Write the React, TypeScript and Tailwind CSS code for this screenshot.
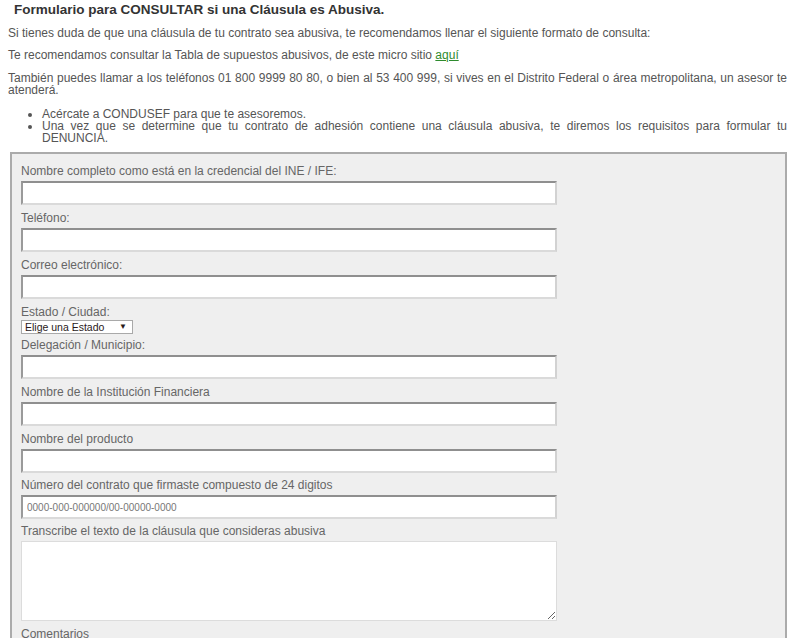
const fields = [
  { label: "Nombre completo como está en la credencial del INE / IFE:" },
  { label: "Teléfono:" },
  { label: "Correo electrónico:" },
];

const fields2 = [
  { label: "Delegación / Municipio:", gap: "mt-[4px]" },
  { label: "Nombre de la Institución Financiera", gap: "mt-[6px]" },
  { label: "Nombre del producto", gap: "mt-[6px]" },
];

function Field({ label, placeholder, gap = "mt-[6px]" }: { label: string; placeholder?: string; gap?: string }) {
  return (
    <div className={gap}>
      <label className="block text-[12px] leading-[14px] text-[#666]">{label}</label>
      <input
        type="text"
        placeholder={placeholder}
        className="mt-[3px] block h-[24px] w-[536px] border-2 border-t-[#8f8f8f] border-l-[#9a9a9a] border-r-[#d2d2d2] border-b-[#dadada] bg-white px-[4px] text-[10px] text-[#333] outline-none placeholder:text-[#777]"
      />
    </div>
  );
}

export default function App() {
  return (
    <div className="h-[638px] overflow-hidden bg-white pl-[8px] pr-[13px] font-['Liberation_Sans',Arial,sans-serif] text-[12px] text-[#555]">
      <h1 className="pl-[6px] pt-[2px] text-[13.5px] font-bold leading-[15px] text-[#333]">
        Formulario para CONSULTAR si una Cláusula es Abusiva.
      </h1>
      <p className="mt-[10px] leading-[12px]">
        Si tienes duda de que una cláusula de tu contrato sea abusiva, te recomendamos llenar el siguiente formato de consulta:
      </p>
      <p className="mt-[10px] leading-[12px]">
        Te recomendamos consultar la Tabla de supuestos abusivos, de este micro sitio{" "}
        <a href="#" className="text-[#2e8b2e] underline">aquí</a>
      </p>
      <p className="mt-[11px] text-justify leading-[12px]">
        También puedes llamar a los teléfonos 01 800 9999 80 80, o bien al 53 400 999, si vives en el Distrito Federal o área metropolitana, un asesor te atenderá.
      </p>
      <ul className="mt-[12px] list-disc pl-[34px] text-justify leading-[12px]">
        <li>Acércate a CONDUSEF para que te asesoremos.</li>
        <li>
          Una vez que se determine que tu contrato de adhesión contiene una cláusula abusiva, te diremos los requisitos para formular tu DENUNCIA.
        </li>
      </ul>
      <div className="ml-[2px] mt-[8px] border-2 border-[#ababab] bg-[#efefef] pl-[9px] pt-[4px] pb-[20px]">
        {fields.map((f) => (
          <Field key={f.label} label={f.label} />
        ))}
        <div className="mt-[6px]">
          <label className="block text-[12px] leading-[14px] text-[#666]">Estado / Ciudad:</label>
          <div className="mt-[1px] flex h-[14px] w-[112px] items-center justify-between border border-[#a9a9a9] bg-white pl-[3px] pr-[5px] text-[10.5px] leading-[12px] text-[#2a1a1a]">
            <span>Elige una Estado</span>
            <span className="text-[8px]">▼</span>
          </div>
        </div>
        {fields2.map((f) => (
          <Field key={f.label} label={f.label} gap={f.gap} />
        ))}
        <Field
          label="Número del contrato que firmaste compuesto de 24 digitos"
          placeholder="0000-000-000000/00-00000-0000"
          gap="mt-[5px]"
        />
        <div className="mt-[5px]">
          <label className="block text-[12px] leading-[14px] text-[#666]">Transcribe el texto de la cláusula que consideras abusiva</label>
          <textarea className="mt-[3px] block h-[80px] w-[536px] border border-[#dcdcdc] bg-white outline-none" />
        </div>
        <div className="mt-[6px]">
          <label className="block text-[12px] leading-[14px] text-[#666]">Comentarios</label>
        </div>
      </div>
    </div>
  );
}
